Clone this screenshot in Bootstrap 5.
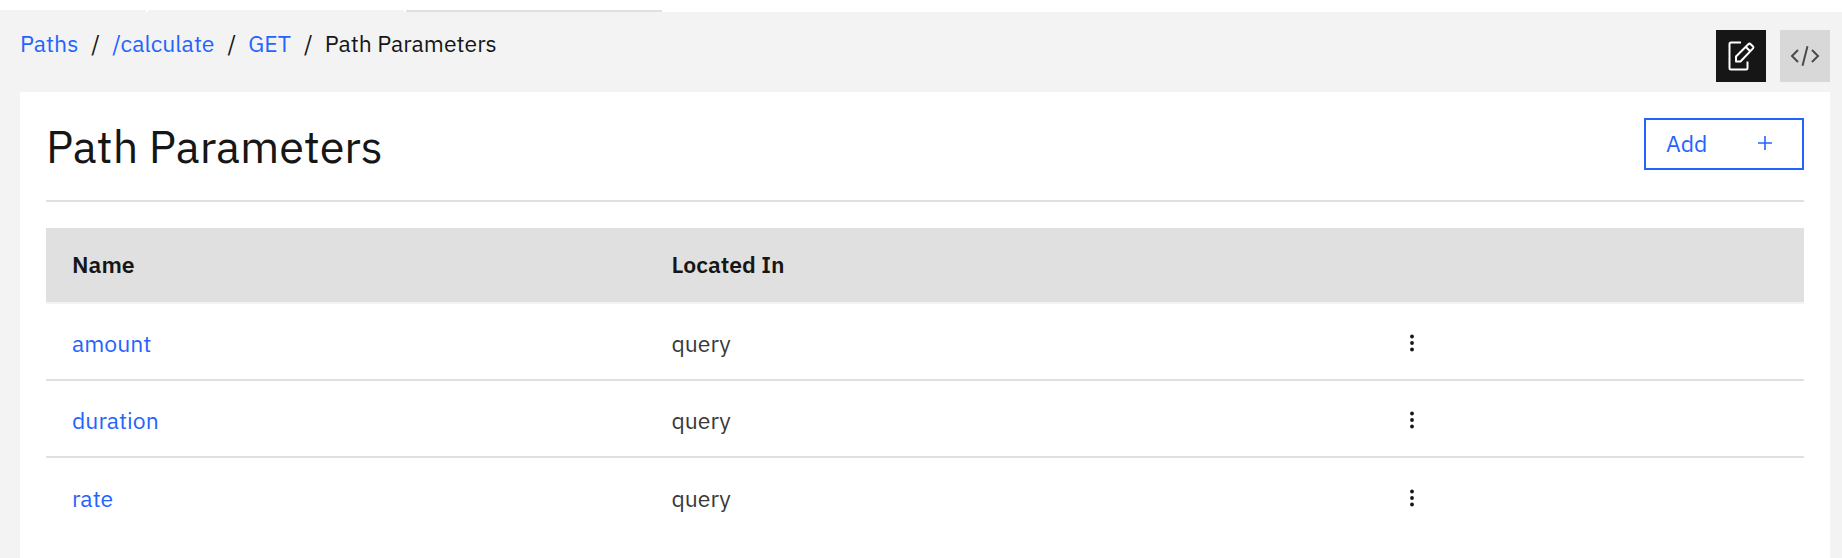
<!DOCTYPE html>
<html lang="en">
<head>
<meta charset="utf-8">
<meta name="viewport" content="width=device-width, initial-scale=1">
<title>Path Parameters</title>
<link href="https://cdn.jsdelivr.net/npm/bootstrap@5.3.0/dist/css/bootstrap.min.css" rel="stylesheet">
<style>
  :root { --ink: #161616; --blue: #2563ff; --line: #e0e0e0; --page: #f3f3f3; }
  body { background: var(--page); color: var(--ink); font-family: "IBM Plex Sans", Roboto, sans-serif; font-size: 23px; line-height: 32px; }
  a { color: var(--blue); text-decoration: none; }
  a:hover { text-decoration: underline; }
  .tab-strip { height: 12px; padding-top: 10px; background: #fff; gap: 2px; }
  .tab-edge { width: 256px; background: var(--page); }
  .tab-edge.first { width: 146px; }
  .tab-edge.current { background: var(--line); }
  .page-body { padding: 0 12px 0 20px; }
  .top-row { height: 80px; padding-top: 16px; }
  .breadcrumb { --bs-breadcrumb-margin-bottom: 0; font-size: 23px; line-height: 30px; }
  .breadcrumb-item + .breadcrumb-item { padding-left: 13px; }
  .breadcrumb-item + .breadcrumb-item::before { padding-right: 12px; color: var(--ink); }
  .breadcrumb-item.active { color: var(--ink); }
  .view-switch { gap: 14px; padding-top: 2px; }
  .view-btn { width: 50px; height: 52px; padding: 0; border: 0; border-radius: 0; background: #d8d8d8; color: #4a4a4a; }
  .view-btn.selected, .view-btn.selected:hover { background: var(--ink); color: #fff; }
  .panel { flex: 1 0 auto; background: #fff; padding: 26px 26px 12px; }
  .panel-head { height: 84px; border-bottom: 2px solid var(--line); margin-bottom: 26px; }
  h1 { font-size: 45px; line-height: 56px; font-weight: 400; }
  .add-btn { width: 160px; height: 52px; padding: 0 29px 2px 20px; border: 2px solid var(--blue); border-radius: 0; color: var(--blue); font-size: 23px; line-height: 32px; }
  .add-btn:hover { background: var(--blue); color: #fff; border-color: var(--blue); }
  .table { --bs-table-color: #393939; --bs-table-bg: transparent; table-layout: fixed; border-collapse: separate; border-spacing: 0; }
  .table > :not(caption) > * > * { padding: 0 26px; border-bottom: 2px solid var(--line); vertical-align: middle; }
  .table > thead > tr > th { height: 76px; padding-bottom: 2px; background: var(--line); color: var(--ink); font-weight: 600; border-bottom-color: var(--page); }
  .table > tbody > tr > td { height: 77px; padding-top: 3px; }
  .table > tbody > tr:last-child > td { border-bottom: 0; }
  .col-name { width: 34.1%; }
  .col-loc { width: 41%; }
  .menu-btn { width: 40px; height: 40px; padding: 0; border: 0; color: var(--ink); }
</style>
</head>
<body class="d-flex flex-column min-vh-100">
<div class="tab-strip d-flex">
  <div class="tab-edge first"></div>
  <div class="tab-edge"></div>
  <div class="tab-edge current"></div>
</div>
<div class="page-body d-flex flex-column flex-grow-1">
  <div class="top-row d-flex justify-content-between align-items-start">
    <nav aria-label="Breadcrumb">
      <ol class="breadcrumb">
        <li class="breadcrumb-item"><a href="#">Paths</a></li>
        <li class="breadcrumb-item"><a href="#">/calculate</a></li>
        <li class="breadcrumb-item"><a href="#">GET</a></li>
        <li class="breadcrumb-item active" aria-current="page">Path Parameters</li>
      </ol>
    </nav>
    <div class="view-switch d-flex">
      <button type="button" class="btn view-btn selected d-flex align-items-center justify-content-center" aria-label="Form view">
        <svg width="32" height="32" viewBox="0 0 32 32" fill="none" stroke="currentColor" stroke-width="2" stroke-linejoin="round" aria-hidden="true"><path d="M16 2.500H6Q4.500 2.500 4.500 4V28Q4.500 29.500 6 29.500H21Q22.500 29.500 22.500 28V21.500"/><path d="M11 21.500V16.500L23.300 4.200Q24.500 3 25.700 4.200L28 6.500Q28.900 7.400 28 8.400L15.500 21.500ZM20.700 6.800L25.200 11.300"/></svg>
      </button>
      <button type="button" class="btn view-btn d-flex align-items-center justify-content-center" aria-label="Source view">
        <svg width="32" height="32" viewBox="0 0 32 32" fill="none" stroke="currentColor" stroke-width="2" aria-hidden="true"><path d="M9 10L3 16L9 22M23 10L29 16L23 22M18.500 6.300L13.500 25.700"/></svg>
      </button>
    </div>
  </div>
  <main class="panel">
    <div class="panel-head d-flex justify-content-between align-items-start">
      <h1 class="mb-0">Path Parameters</h1>
      <button type="button" class="btn add-btn d-flex align-items-center justify-content-between">Add
        <svg width="16" height="16" viewBox="0 0 16 16" fill="none" stroke="currentColor" stroke-width="1.600" aria-hidden="true"><path d="M1 8H15M8 1V15"/></svg>
      </button>
    </div>
    <table class="table mb-0">
      <thead><tr><th class="col-name" scope="col">Name</th><th class="col-loc" scope="col">Located In</th><th scope="col" aria-label="Actions"></th></tr></thead>
      <tbody>
        <tr><td><a href="#">amount</a></td><td>query</td><td><button type="button" class="btn menu-btn d-flex align-items-center justify-content-center" aria-label="Actions for amount"><svg width="6" height="20" viewBox="0 0 6 20" fill="currentColor" aria-hidden="true"><circle cx="3" cy="3.500" r="1.900"/><circle cx="3" cy="10" r="1.900"/><circle cx="3" cy="16.500" r="1.900"/></svg></button></td></tr>
        <tr><td><a href="#">duration</a></td><td>query</td><td><button type="button" class="btn menu-btn d-flex align-items-center justify-content-center" aria-label="Actions for duration"><svg width="6" height="20" viewBox="0 0 6 20" fill="currentColor" aria-hidden="true"><circle cx="3" cy="3.500" r="1.900"/><circle cx="3" cy="10" r="1.900"/><circle cx="3" cy="16.500" r="1.900"/></svg></button></td></tr>
        <tr><td><a href="#">rate</a></td><td>query</td><td><button type="button" class="btn menu-btn d-flex align-items-center justify-content-center" aria-label="Actions for rate"><svg width="6" height="20" viewBox="0 0 6 20" fill="currentColor" aria-hidden="true"><circle cx="3" cy="3.500" r="1.900"/><circle cx="3" cy="10" r="1.900"/><circle cx="3" cy="16.500" r="1.900"/></svg></button></td></tr>
      </tbody>
    </table>
  </main>
</div>
<script src="https://cdn.jsdelivr.net/npm/bootstrap@5.3.0/dist/js/bootstrap.bundle.min.js"></script>
</body>
</html>
